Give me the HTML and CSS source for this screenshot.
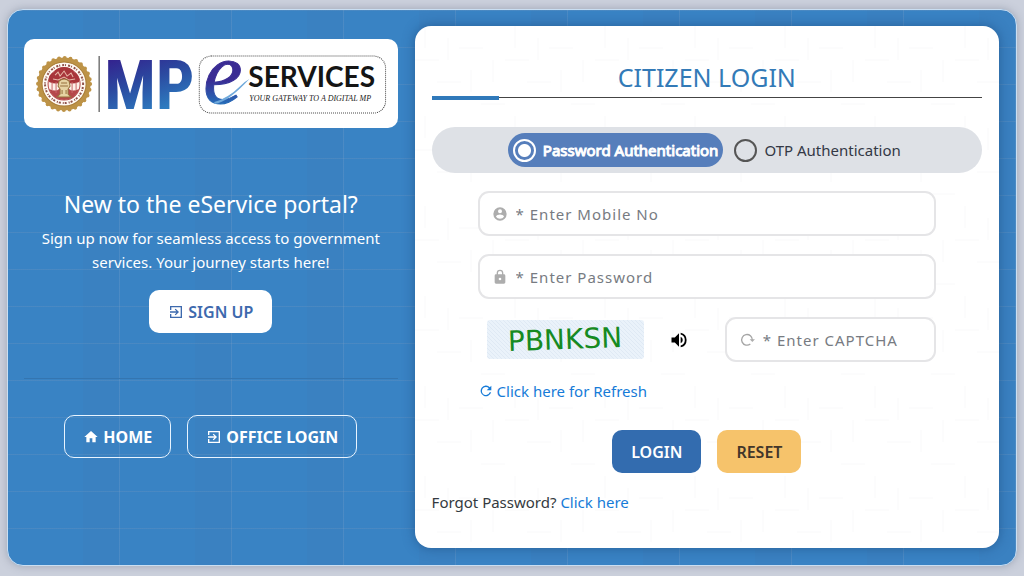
FILE: index.html
```html
<!DOCTYPE html>
<html lang="en">
	<head>
		<meta charset="UTF-8">
		<meta name="viewport" content="width=device-width, initial-scale=1">
		<title>Citizen Login</title>
		<link rel="stylesheet" href="styles.css">
	</head>
	<body>
		<main class="wrapper">
			<section class="intro">
				<div class="logo">
					<svg viewBox="0 0 373 89" role="img" aria-label="MP eServices">
						<defs>
							<linearGradient id="mpFill" gradientUnits="userSpaceOnUse" x1="100" y1="17" x2="120" y2="76">
								<stop offset="0" stop-color="#33248f"/>
								<stop offset=".45" stop-color="#2b489f"/>
								<stop offset="1" stop-color="#2d7cc0"/>
							</linearGradient>
							<linearGradient id="eFill" gradientUnits="userSpaceOnUse" x1="200" y1="24" x2="200" y2="66">
								<stop offset=".4" stop-color="#3a2c94"/>
								<stop offset="1" stop-color="#2470ba"/>
							</linearGradient>
						</defs>
						<!-- state seal -->
						<circle cx="40" cy="45" r="24" fill="none" stroke="#bd9347" stroke-width="5"/>
						<circle cx="40" cy="45" r="26" fill="none" stroke="#bd9347" stroke-width="4" stroke-linecap="round" stroke-dasharray="0 5.83"/>
						<circle cx="40" cy="45" r="22" fill="#fffaf4" stroke="#a97c36"/>
						<circle cx="40" cy="45" r="19" fill="none" stroke="#90534a" stroke-width="2" stroke-dasharray="1 2 2 1"/>
						<circle cx="40" cy="45" r="16" fill="#fdf0ea" stroke="#b5484a"/>
						<path d="M25 43q-1-8 5-10 3-5 10-5t10 5q6 3 5 10-7 3-15 0-8 3-15 0z" fill="#a8353a"/>
						<path d="M25 50q7 3 10 0h10q3 3 10 0-3 10-15 11-12-1-15-11z" fill="#b5484a"/>
						<path d="M31 36l3-3 2 4 4-5 3 5 4-3 2 4M29 40l5 1 6-3 5 3 6-1" fill="none" stroke="#e8b9a8"/>
						<path d="M28 43v8M32 43v11M48 43v11M52 43v8" stroke="#c9686a"/>
						<path d="M35 42q5-4 10 0l1 5-2 3v5l3 3H33l3-3v-5l-2-3z" fill="#e6d3a3" stroke="#96713c"/>
						<path d="M37 44h6M36 47h8M38 51v4M42 51v4" stroke="#96713c"/>
						<path d="M75 17v56" stroke="#333" stroke-width="1"/>
						<text class="logo-mp" x="80" y="70" fill="url(#mpFill)">MP</text>
						<rect x="175" y="17" width="186" height="57" rx="12" fill="none" stroke="#444" stroke-width="1" stroke-dasharray="1 1"/>
						<text class="logo-e" x="179" y="64" fill="url(#eFill)" stroke="url(#eFill)">e</text>
						<path d="M190 65q14-2 35-25-4 2-9 7-12 12-26 16z" fill="#6fa9db"/>
						<text class="logo-services" x="224" y="48">SERVICES</text>
						<text class="logo-tag" x="225" y="62">YOUR GATEWAY TO A DIGITAL MP</text>
					</svg>
				</div>
				<div class="welcome">
					<h2>New to the eService portal?</h2>
					<p>Sign up now for seamless access to government services. Your journey starts here!</p>
					<a class="btn btn-signup" href="#">
						<svg class="icon" viewBox="0 0 24 24"><path d="M10.1 15.6 11.5 17l5-5-5-5-1.4 1.4 2.6 2.6H3v2h9.700zM21 3H3v6h2V5h14v14H5v-4H3v6h18z"/></svg>
						SIGN UP
					</a>
				</div>
				<nav class="links">
					<a class="btn btn-outline" href="#">
						<svg class="icon" viewBox="0 0 24 24"><path d="M10 20v-6h4v6h5v-8h3L12 3 2 12h3v8z"/></svg>
						HOME
					</a>
					<a class="btn btn-outline" href="#">
						<svg class="icon" viewBox="0 0 24 24"><path d="M10.1 15.6 11.5 17l5-5-5-5-1.4 1.4 2.6 2.6H3v2h9.700zM21 3H3v6h2V5h14v14H5v-4H3v6h18z"/></svg>
						OFFICE LOGIN
					</a>
				</nav>
			</section>
			<section class="card">
				<h1>CITIZEN LOGIN</h1>
				<form>
					<div class="auth">
						<label class="auth-option"><input type="radio" name="auth" checked>Password Authentication</label>
						<label class="auth-option"><input type="radio" name="auth">OTP Authentication</label>
					</div>
					<div class="fields">
						<label class="field">
							<svg class="icon" viewBox="0 0 24 24"><path fill-rule="evenodd" d="M12 2a10 10 0 1 0 0 20 10 10 0 0 0 0-20zm0 3a3 3 0 1 1 0 6 3 3 0 0 1 0-6zm0 14.200a7.200 7.200 0 0 1-6-3.200c0-2 4-3.100 6-3.100s6 1.100 6 3.100a7.200 7.200 0 0 1-6 3.200z"/></svg>
							<input type="text" placeholder="* Enter Mobile No" aria-label="Mobile No">
						</label>
						<label class="field">
							<svg class="icon" viewBox="0 0 24 24"><path fill-rule="evenodd" d="M18 8h-1V6A5 5 0 0 0 7 6v2H6a2 2 0 0 0-2 2v10c0 1 1 2 2 2h12c1 0 2-1 2-2V10a2 2 0 0 0-2-2zM12 17a2 2 0 1 1 0-4 2 2 0 0 1 0 4zM9 8V6a3 3 0 0 1 6 0v2z"/></svg>
							<input type="password" placeholder="* Enter Password" aria-label="Password">
						</label>
						<div class="captcha">
							<svg class="captcha-code" viewBox="0 0 157 39">
								<defs>
									<pattern id="hatch" width="4" height="4" patternUnits="userSpaceOnUse">
										<rect width="4" height="4" fill="#eaf2fa"/>
										<path d="M0 0l4 4" stroke="#dfe9f4"/>
									</pattern>
								</defs>
								<rect width="157" height="39" rx="3" fill="url(#hatch)"/>
								<text x="78" y="29" text-anchor="middle" transform="rotate(-2 78 20)">PBNKSN</text>
							</svg>
							<button class="speaker" type="button" aria-label="Play captcha">
								<svg viewBox="0 0 24 24"><path d="M3 9v6h4l5 5V4L7 9zM16.500 12A4.500 4.500 0 0 0 14 8v8a4.500 4.500 0 0 0 2.500-4zM14 3.200v2.100a7 7 0 0 1 0 13.400v2.100a9 9 0 0 0 0-17.600z"/></svg>
							</button>
							<label class="field field-captcha">
								<svg class="icon" viewBox="0 0 24 24"><path d="M17 18A8 8 0 1 1 20 12" fill="none" stroke="#a5a5a5" stroke-width="2"/><path d="M16 11h8l-4 4z"/></svg>
								<input type="text" placeholder="* Enter CAPTCHA" aria-label="Captcha">
							</label>
						</div>
						<a class="refresh" href="#">
							<svg class="icon" viewBox="0 0 24 24"><path d="M17.700 6.300A8 8 0 1 0 19.700 14h-2.100A6 6 0 1 1 12 6c1.700 0 3.100.7 4.200 1.800L13 11h7V4z"/></svg>
							Click here for Refresh
						</a>
					</div>
					<div class="actions">
						<button class="btn btn-login" type="submit">LOGIN</button>
						<button class="btn btn-reset" type="reset">RESET</button>
					</div>
					<p class="forgot">Forgot Password? <a href="#">Click here</a></p>
				</form>
			</section>
		</main>
	</body>
</html>
```
FILE: styles.css
```css
*{
	box-sizing: border-box;
}
body{
	margin: 0;
	padding: 9px 7px 10px;
	font-family: "Noto Sans", sans-serif;
	font-size: 15px;
	line-height: 24px;
	color: #343a40;
	background-color: #cbd0dc;
}
h1, h2, p{
	margin: 0;
	font-weight: 400;
}
a{
	color: #167bd8;
	text-decoration: none;
}
input, button{
	font-family: inherit;
}
.icon{
	width: 16px;
	height: 16px;
	fill: currentColor;
	flex: none;
}

/* blue frame with the checked pattern */
.wrapper{
	display: grid;
	grid-template-columns: minmax(0, 39fr) minmax(0, 61fr);
	gap: 17px;
	min-height: calc(100vh - 19px);
	padding: 16px 17px 17px 16px;
	border: 1px solid #c9def2;
	border-radius: 16px;
	background-color: #3983c4;
	background-image:
		linear-gradient(90deg, transparent 111px, rgba(130,165,205,.25) 111px),
		linear-gradient(rgba(110,150,190,.3) 1px, transparent 1px),
		linear-gradient(90deg, transparent 75px, rgba(60,120,180,.2) 75px);
	background-size: 112px 112px, 37px 37px, 112px 112px;
	box-shadow: 0 0 8px rgba(90,100,120,.4);
}
.intro{
	display: flex;
	flex-direction: column;
	padding-top: 13px;
	text-align: center;
	color: #fff;
}
.logo{
	border-radius: 10px;
	background-color: #fff;
}
.logo svg{
	display: block;
	width: 100%;
}
.logo-mp{
	font: bold 68px "Liberation Sans Narrow", "Roboto Condensed", "Open Sans Condensed", "Liberation Sans", sans-serif;
}
.logo-e{
	font: italic 88px "Liberation Serif", serif;
	stroke-width: 1px;
}
.logo-services{
	font: bold 28px Lato, sans-serif;
	fill: #151515;
}
.logo-tag{
	font: italic 8px "Liberation Serif", serif;
	fill: #222;
}
.welcome{
	padding: 60px 12px 45px;
	border-bottom: 1px solid #3475b0;
}
.welcome h2{
	margin-bottom: 6px;
	font-size: 23px;
	line-height: 32px;
}
.btn{
	display: inline-flex;
	align-items: center;
	justify-content: center;
	gap: 4px;
	height: 43px;
	padding: 0 18px;
	border: 1px solid transparent;
	border-radius: 10px;
	font-size: 16px;
	font-weight: 600;
	line-height: 24px;
	cursor: pointer;
}
.btn-signup{
	margin-top: 16px;
	background-color: #fff;
	color: #3d69ad;
}
.links{
	display: flex;
	justify-content: center;
	gap: 16px;
	padding-top: 36px;
}
.btn-outline{
	border-color: #e8f4ff;
	font-weight: 700;
	color: #fff;
}

.card{
	padding: 34px 17px;
	border-radius: 16px;
	background-color: #fff;
	background-image: url("data:image/svg+xml,%3Csvg xmlns='http://www.w3.org/2000/svg' width='90' height='90'%3E%3Cpath d='M10 0v22M33 12v22M56 44v22M78 34v22M0 34h24M22 56h24M44 22h24M66 78h24' fill='none' stroke='%23f9f9fa' stroke-width='1'/%3E%3C/svg%3E");
	box-shadow: 0 0 12px rgba(20,60,110,.5);
}
.card h1{
	position: relative;
	padding-bottom: 3px;
	border-bottom: 1px solid #444;
	text-align: center;
	font-size: 25px;
	line-height: 34px;
	color: #337ab7;
}
.card h1::after{
	content: "";
	position: absolute;
	left: 0;
	bottom: -3px;
	width: 67px;
	height: 4px;
	background-color: #3079ba;
}
.auth{
	display: flex;
	justify-content: center;
	align-items: center;
	gap: 6px;
	height: 46px;
	margin: 29px 0 18px;
	border-radius: 23px;
	background-color: #dee1e6;
}
.auth-option{
	display: flex;
	align-items: center;
	gap: 7px;
	height: 34px;
	padding: 0 5px;
	border-radius: 17px;
	font-size: 15px;
	color: #333845;
	cursor: pointer;
}
.auth-option:has(:checked){
	background-color: #567ebb;
	color: #fff;
	-webkit-text-stroke: 1px #fff;
}
.auth-option input{
	appearance: none;
	width: 23px;
	height: 23px;
	margin: 0;
	border: 2px solid #555;
	border-radius: 50%;
}
.auth-option input:checked{
	border-color: #fff;
	background: radial-gradient(circle, #fff 6px, transparent 7px);
}
.fields{
	display: flex;
	flex-direction: column;
	gap: 18px;
	padding: 0 46px;
}
.field{
	display: flex;
	align-items: center;
	gap: 8px;
	height: 45px;
	padding: 0 35px 0 12px;
	border: 2px solid #e5e5e7;
	border-radius: 11px;
	background-color: #fff;
	color: #adadad;
}
.field input{
	flex: 1;
	min-width: 0;
	padding: 0;
	border: 0;
	outline: 0;
	background: none;
	font-size: 15px;
	letter-spacing: 1px;
	color: #343a40;
}
.field input::placeholder{
	color: #777b82;
}
.captcha{
	display: flex;
	align-items: center;
	gap: 25px;
	padding-left: 9px;
}
.captcha-code{
	width: 157px;
	height: 39px;
}
.captcha-code text{
	font: 28px "DejaVu Sans", sans-serif;
	fill: #168a22;
}
.speaker{
	display: flex;
	padding: 0;
	border: 0;
	background: none;
	cursor: pointer;
}
.speaker svg{
	width: 20px;
	height: 20px;
}
.field-captcha{
	width: 47%;
	margin-left: auto;
}
.refresh{
	display: flex;
	align-items: center;
	gap: 3px;
	line-height: 22px;
}
.actions{
	display: flex;
	justify-content: center;
	gap: 16px;
	margin-top: 28px;
}
.btn-login{
	background-color: #336caf;
	color: #fff;
}
.btn-reset{
	background-color: #f6c36b;
	color: #42362a;
}
.forgot{
	margin-top: 17px;
}
```
